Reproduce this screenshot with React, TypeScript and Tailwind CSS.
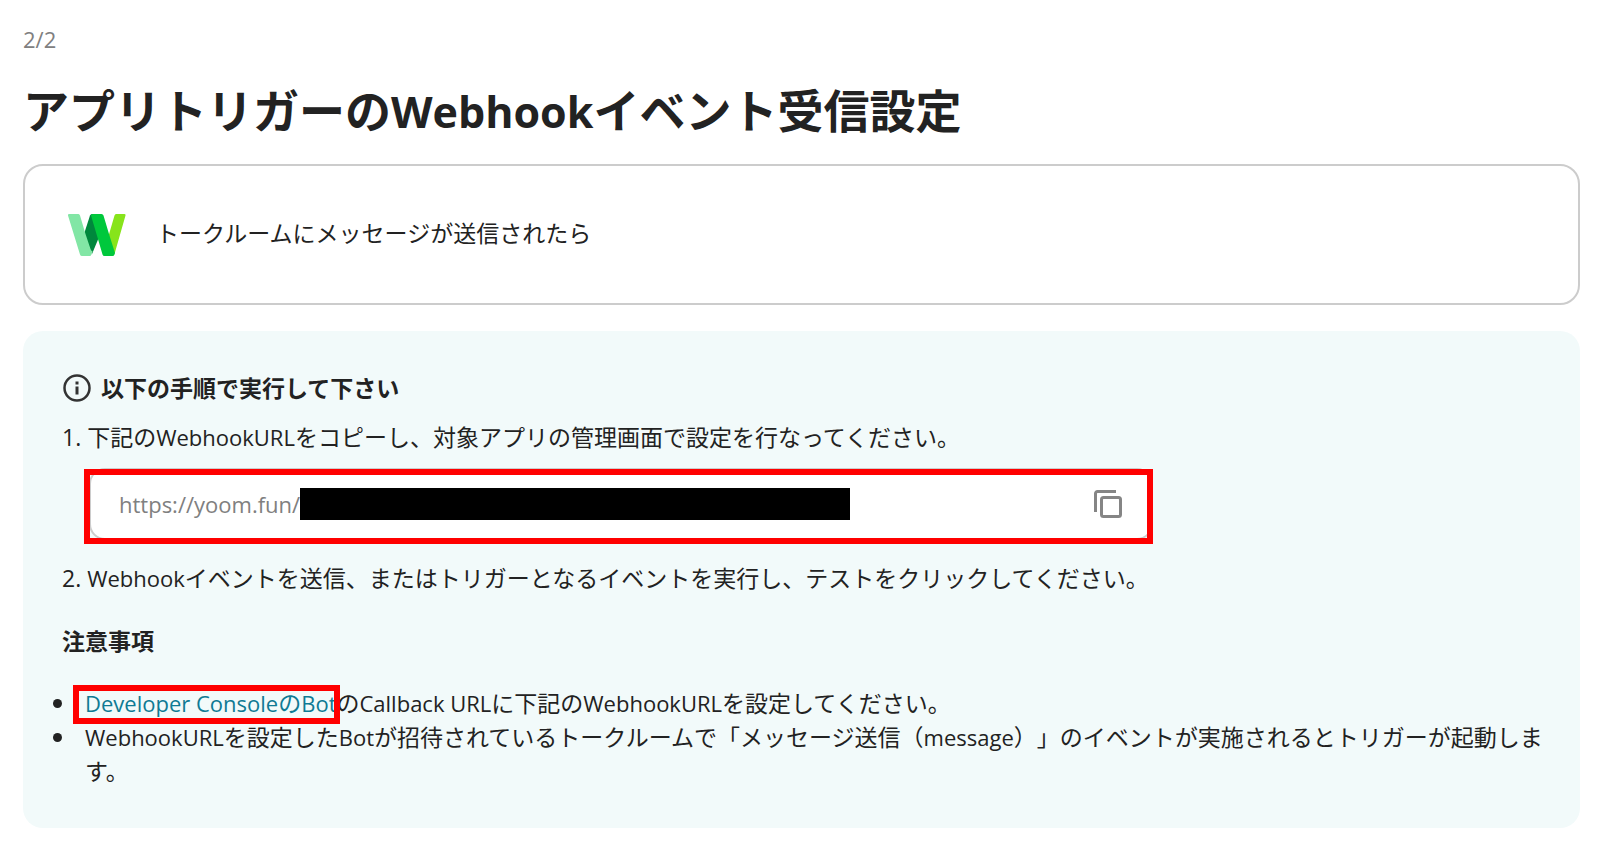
import type { ReactNode } from "react";

const Latin = ({ children }: { children: ReactNode }) => <span className="text-[22px]">{children}</span>;

const notes: ReactNode[] = [
  <>
    <span className="relative">
      <a href="#developer-console" className="text-[#0f7a94]">
        <Latin>Developer Console</Latin>の<Latin>Bot</Latin>
      </a>
      <span className="pointer-events-none absolute -bottom-[5px] -left-3 -right-1 -top-0.5 border-[6px] border-[#ff0000]" />
    </span>
    の<Latin>Callback URL</Latin>に下記の<Latin>WebhookURL</Latin>を設定してください。
  </>,
  <>
    <Latin>WebhookURL</Latin>を設定した<Latin>Bot</Latin>が招待されているトークルームで「メッセージ送信（
    <Latin>message</Latin>）」のイベントが実施されるとトリガーが起動します。
  </>,
];

const WorksLogo = () => (
  <svg width="58" height="42" viewBox="0 0 58 42" aria-hidden="true">
    <path d="M48 0h8.5q1.5 0 1 1.5L46.5 40l-6-18 6-20.5Q47 0 48 0z" fill="#87e41b" />
    <path d="M24 0h6l4 16-10 24-8-20 6-18.5Q22.5 0 24 0z" fill="#00873c" />
    <path d="M1 0h9.500q1 0 1.500 1.500L17.500 20 23 36.500l1.500.5-1 3.500q-.5 1.500-2 1.500H14q-1.500 0-2-1.500L0 1.500Q-.5 0 1 0z" fill="#82e6a5" />
    <path d="M24.500 0h9q1.500 0 2 1.500L41 20l6 19-.5 1.500Q46 42 44.500 42h-8q-1.500 0-2-1.500L28.500 20 23 1.500Q23 0 24.500 0z" fill="#00c83c" />
  </svg>
);

const InfoIcon = () => (
  <svg width="28" height="28" viewBox="0 0 28 28" fill="none" aria-hidden="true">
    <circle cx="14" cy="14" r="12.5" stroke="#333" strokeWidth="2.5" />
    <path d="M14 12.5v8M14 7.5v3" stroke="#333" strokeWidth="3" />
  </svg>
);

const CopyIcon = () => (
  <svg width="30" height="30" viewBox="0 0 30 30" fill="none" stroke="#858585" strokeWidth="3" aria-hidden="true">
    <path d="M2.5 23V4.5a2 2 0 0 1 2-2H23" />
    <rect x="8.5" y="8.5" width="19" height="19" rx="2" />
  </svg>
);

const UrlField = () => (
  <div className="relative ml-[27px] max-w-[1064px]">
    <div className="flex h-[72px] items-center rounded-2xl border-2 border-[#ccc] bg-white px-7">
      <input
        type="text"
        readOnly
        aria-label="WebhookURL"
        value="https://yoom.fun/"
        className="w-[181px] bg-transparent text-[22px] text-[#808080] outline-none"
      />
      <div className="h-8 w-[550px] bg-black" />
      <button type="button" aria-label="コピー" className="ml-auto">
        <CopyIcon />
      </button>
    </div>
    <div className="pointer-events-none absolute -bottom-1 -left-[5px] right-0 top-px border-[6px] border-[#ff0000]" />
  </div>
);

const App = () => {
  return (
    <main className="bg-white pb-6 pl-[23px] pr-5 pt-[22px] font-['Open_Sans','Noto_Sans_CJK_JP',sans-serif] text-[23px] leading-[34px] text-[#222] [text-spacing-trim:space-all]">
      <p className="text-[22px] text-[#808080]">2/2</p>
      <h1 className="mt-5 text-[46px] font-bold leading-[68px]">
        アプリトリガーの<span className="text-[43px]">Webhook</span>イベント受信設定
      </h1>

      {/* Trigger */}
      <section className="mt-[18px] flex h-[141px] items-center gap-[30px] rounded-[20px] border-2 border-[#ccc] px-[43px]">
        <WorksLogo />
        <p className="pb-1">トークルームにメッセージが送信されたら</p>
      </section>

      {/* Instructions */}
      <section className="mt-[26px] rounded-[20px] bg-[#f2fafa] py-10 pl-10 pr-7">
        <h2 className="flex items-center gap-[10px] font-bold">
          <InfoIcon />
          以下の手順で実行して下さい
        </h2>
        <div className="-ml-px">
          <p className="mb-[14px] mt-[15px]">
            1. 下記の<Latin>WebhookURL</Latin>をコピーし、対象アプリの管理画面で設定を行なってください。
          </p>
          <UrlField />
          <p className="mt-[21px]">
            2. <Latin>Webhook</Latin>イベントを送信、またはトリガーとなるイベントを実行し、テストをクリックしてください。
          </p>
          <h3 className="mt-[29px] font-bold">注意事項</h3>
          <ul className="-ml-[9px] mt-7">
            {notes.map((note, i) => (
              <li key={i} className="flex gap-[23px]">
                <span className="mt-[13px] size-[9px] shrink-0 rounded-full bg-[#222]" />
                <span>{note}</span>
              </li>
            ))}
          </ul>
        </div>
      </section>
    </main>
  );
};

export default App;
